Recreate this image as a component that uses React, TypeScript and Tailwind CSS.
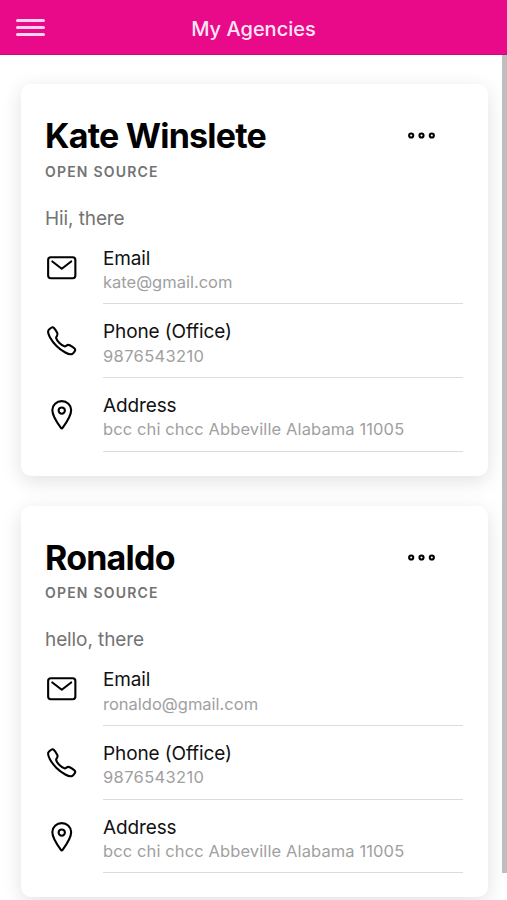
import { IoCallOutline, IoEllipsisHorizontalOutline, IoLocationOutline, IoMailOutline } from 'react-icons/io5';

type Agency = {
  name: string;
  type: string;
  note: string;
  email: string;
  phone: string;
  address: string;
};

const agencies: Agency[] = [
  {
    name: 'Kate Winslete',
    type: 'Open Source',
    note: 'Hii, there',
    email: 'kate@gmail.com',
    phone: '9876543210',
    address: 'bcc chi chcc Abbeville Alabama 11005',
  },
  {
    name: 'Ronaldo',
    type: 'Open Source',
    note: 'hello, there',
    email: 'ronaldo@gmail.com',
    phone: '9876543210',
    address: 'bcc chi chcc Abbeville Alabama 11005',
  },
];

interface ContactRowProps {
  icon: React.ReactNode;
  label: string;
  value: string;
  valueClass?: string;
}

function ContactRow({ icon, label, value, valueClass = '' }: ContactRowProps) {
  return (
    <div className="flex h-[73.7px]">
      <div className="w-[58px] pt-[20px] text-[33.5px] text-black">{icon}</div>
      <div className="flex-1 border-b border-[#dcdcdc] pt-[15px]">
        <div className="text-[19px] leading-[26px] tracking-[-0.12px] text-[#111]">{label}</div>
        <div className={`-mt-[0.7px] text-[16.5px] leading-[23px] text-[#a0a0a0] ${valueClass}`}>{value}</div>
      </div>
    </div>
  );
}

function AgencyCard({ agency }: { agency: Agency }) {
  return (
    <div className="h-[391.8px] rounded-[10px] bg-white pl-[24px] pr-[25px] pt-[31px] shadow-[0_5px_20px_rgba(0,0,0,0.12)]">
      <div className="flex items-start justify-between">
        <h2 className="text-[34px] font-bold leading-[42px] tracking-[-0.78px] text-black">{agency.name}</h2>
        <button className="mr-[25px] mt-[4px] text-[33px] text-black" title="More">
          <IoEllipsisHorizontalOutline />
        </button>
      </div>
      <div className="mt-[4.7px] text-[14px] font-semibold uppercase leading-[20px] tracking-[1.2px] text-[#737373]">
        {agency.type}
      </div>
      <p className="mt-[24px] text-[19px] leading-[26px] tracking-[-0.1px] text-[#737373]">{agency.note}</p>
      <div className="-mt-[0.9px]">
        <ContactRow icon={<IoMailOutline />} label="Email" value={agency.email} />
        <ContactRow
          icon={<IoCallOutline />}
          label="Phone (Office)"
          value={agency.phone}
          valueClass="tracking-[0.35px]"
        />
        <ContactRow
          icon={<IoLocationOutline />}
          label="Address"
          value={agency.address}
          valueClass="tracking-[0.11px]"
        />
      </div>
    </div>
  );
}

export default function App() {
  return (
    <div className="flex h-[900px] w-[507px] flex-col overflow-hidden bg-white font-['Inter','Liberation_Sans',sans-serif]">
      <header className="grid h-[55px] shrink-0 grid-cols-[1fr_auto_1fr] items-center border-b border-[#d0087c] bg-[#e80a89] px-[16px]">
        <button className="mt-[1px] flex w-[29px] flex-col gap-[4px]" title="Menu">
          <span className="h-[3px] rounded-full bg-[#ffd3ee]" />
          <span className="h-[3px] rounded-full bg-[#ffd3ee]" />
          <span className="h-[3px] rounded-full bg-[#ffd3ee]" />
        </button>
        <h1 className="pt-[3px] text-[20px] font-medium leading-[28px] text-[#ffe6f5]">My Agencies</h1>
      </header>
      <main className="flex min-h-0 flex-1 overflow-hidden">
        <div className="flex flex-1 flex-col gap-[29.8px] pl-[21px] pr-[14px] pt-[29px]">
          {agencies.map((agency) => (
            <AgencyCard key={agency.name} agency={agency} />
          ))}
        </div>
        <div className="h-[818px] w-[5px] bg-[#bebebe]" />
      </main>
    </div>
  );
}
